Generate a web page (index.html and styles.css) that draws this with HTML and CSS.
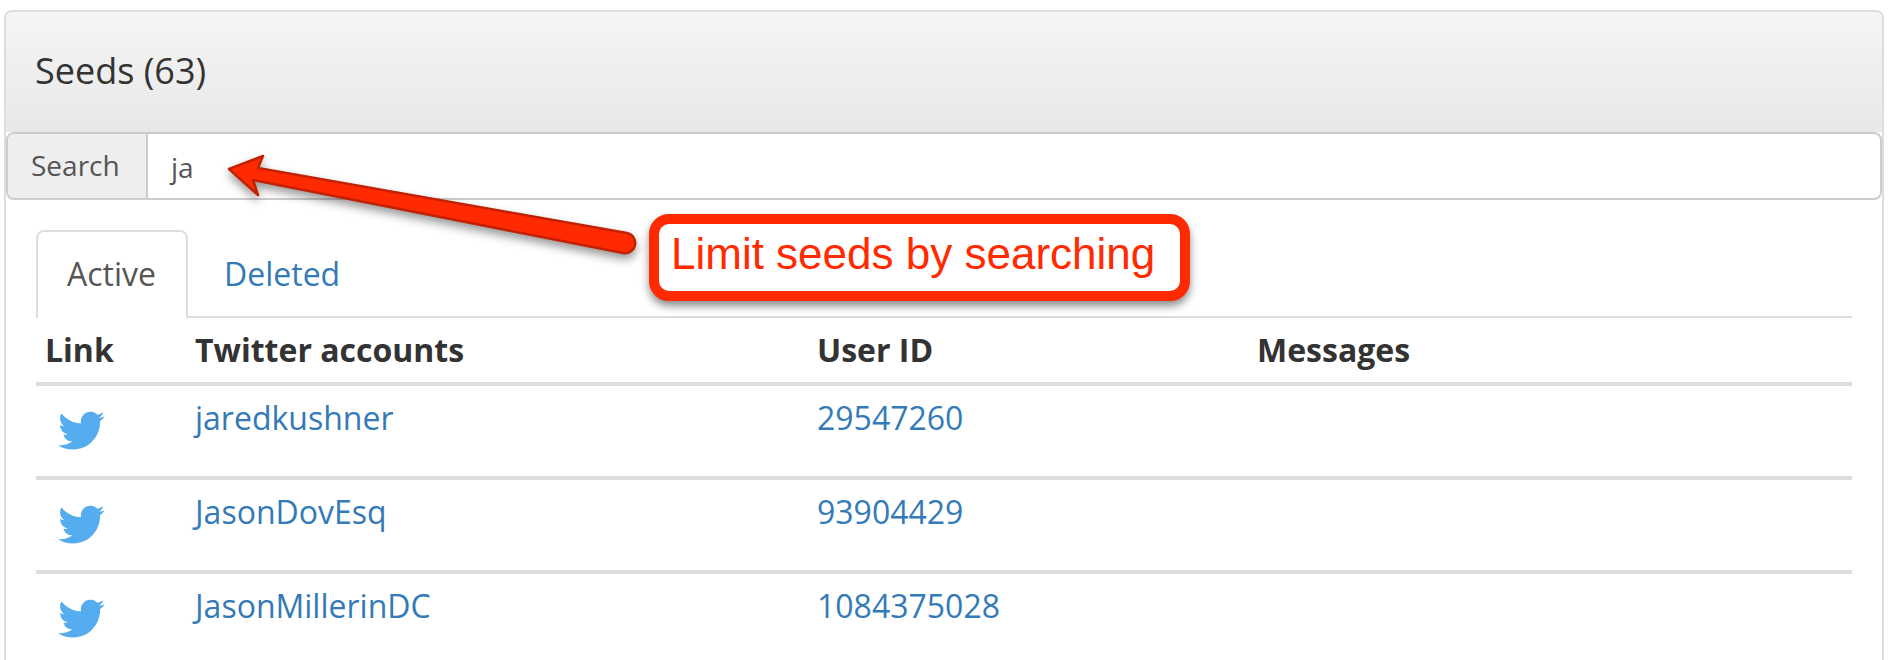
FILE: index.html
```html
<!DOCTYPE html>
<html lang="en">
<head>
<meta charset="utf-8">
<title>Seeds</title>
<link rel="stylesheet" href="styles.css">
</head>
<body>
<svg class="sprite" width="0" height="0"><symbol id="bird" viewBox="0 1.4 24 20.6"><path d="M23.953 4.57a10 10 0 01-2.825.775 4.958 4.958 0 002.163-2.723c-.951.555-2.005.959-3.127 1.184a4.92 4.92 0 00-8.384 4.482C7.69 8.095 4.067 6.13 1.64 3.162a4.822 4.822 0 00-.666 2.475c0 1.71.87 3.213 2.188 4.096a4.904 4.904 0 01-2.228-.616v.06a4.923 4.923 0 003.946 4.827 4.996 4.996 0 01-2.212.085 4.936 4.936 0 004.604 3.417 9.867 9.867 0 01-6.102 2.105c-.39 0-.779-.023-1.17-.067a13.995 13.995 0 007.557 2.209c9.053 0 13.998-7.496 13.998-13.985 0-.21 0-.42-.015-.63A9.935 9.935 0 0024 4.59z"/></symbol></svg>
<section class="panel">
  <header class="panel-heading"><h1 class="panel-title">Seeds (63)</h1></header>
  <div class="input-group">
    <span class="addon">Search</span>
    <span class="input">ja</span>
  </div>
  <div class="panel-body">
    <ul class="tabs">
      <li class="tab tab-active">Active</li>
      <li class="tab"><a href="#">Deleted</a></li>
    </ul>
    <table class="seeds">
      <thead>
        <tr><th class="col-link">Link</th><th class="col-name">Twitter accounts</th><th class="col-id">User ID</th><th>Messages</th></tr>
      </thead>
      <tbody>
        <tr><td><svg class="bird"><use href="#bird"/></svg></td><td><a href="#">jaredkushner</a></td><td><a href="#">29547260</a></td><td></td></tr>
        <tr><td><svg class="bird"><use href="#bird"/></svg></td><td><a href="#">JasonDovEsq</a></td><td><a href="#">93904429</a></td><td></td></tr>
        <tr><td><svg class="bird"><use href="#bird"/></svg></td><td><a href="#">JasonMillerinDC</a></td><td><a href="#">1084375028</a></td><td></td></tr>
      </tbody>
    </table>
  </div>
</section>
<svg class="arrow" viewBox="0 0 1902 660" width="1902" height="660">
  <path d="M229 169 L263 156 L258 168 L627 233 A10 10 0 0 1 623 253 L253 180 L258 195 Z"/>
</svg>
<div class="callout">Limit seeds by searching</div>
</body>
</html>
```
FILE: styles.css
```css
html, body { margin: 0; height: 660px; overflow: hidden; background: #fff; }
body {
  font-family: "Open Sans", "Noto Sans", sans-serif;
  font-size: 32px;
  line-height: 42px;
  color: #333;
  padding: 10px 18px 0 4px;
  box-sizing: border-box;
  position: relative;
}
a { color: #337ab7; text-decoration: none; }
.sprite { position: absolute; }

.panel {
  border: 2px solid #ddd;
  border-bottom: 0;
  border-radius: 8px 8px 0 0;
  height: 650px;
  overflow: hidden;
  box-sizing: border-box;
}
.panel-heading {
  height: 120px;
  box-sizing: border-box;
  padding: 37px 25px 0 29px;
  background: linear-gradient(#f5f5f5, #e8e8e8);
  border-radius: 6px 6px 0 0;
}
.panel-title { margin: 0; font-size: 36px; font-weight: 400; line-height: 44px; color: #333; }

.input-group {
  display: flex;
  height: 68px;
  box-sizing: border-box;
  border: 2px solid #ccc;
  border-radius: 8px;
  background: #fff;
  font-size: 28px;
}
.addon {
  width: 140px;
  flex: none;
  box-sizing: border-box;
  background: #eee;
  color: #555;
  border-right: 2px solid #ccc;
  border-radius: 6px 0 0 6px;
  padding: 10px 0 0 23px;
}
.input { padding: 12px 0 0 23px; color: #555; }

.panel-body { padding: 30px 30px 0 30px; }
.tabs {
  display: flex;
  list-style: none;
  margin: 0;
  padding: 0;
  height: 88px;
  box-sizing: border-box;
  border-bottom: 2px solid #ddd;
}
.tab { padding: 23px 31px 0 36px; height: 88px; box-sizing: border-box; }
.tab-active {
  width: 152px;
  padding: 21px 0 0 29px;
  color: #555;
  background: #fff;
  border: 2px solid #ddd;
  border-bottom: 0;
  border-radius: 8px 8px 0 0;
}
.seeds { width: 100%; border-collapse: collapse; table-layout: fixed; }
.seeds th {
  text-align: left;
  font-weight: 700;
  padding: 11px 10px 11px;
  height: 65px;
  box-sizing: border-box;
  border-bottom: 4px solid #ddd;
}
.seeds th:first-child { padding-left: 9px; }
.seeds td {
  vertical-align: top;
  padding: 11px 10px 0;
  height: 94px;
  box-sizing: border-box;
  border-bottom: 4px solid #ddd;
}
.col-link { width: 149px; }
.col-name { width: 622px; }
.col-id { width: 440px; }
.bird { display: block; width: 47px; height: 40px; margin: 13px 0 0 12px; fill: #55acee; }

.arrow {
  position: absolute;
  left: 0;
  top: 0;
  filter: drop-shadow(0 5px 5px rgba(0,0,0,.4));
}
.arrow path { fill: #ff2a00; stroke: #c32100; stroke-width: 2.5; stroke-linejoin: round; }
.callout {
  position: absolute;
  left: 649px;
  top: 214px;
  width: 541px;
  height: 87px;
  box-sizing: border-box;
  border: 10px solid #ff2a00;
  border-radius: 20px;
  background: #fff;
  box-shadow: 0 5px 8px rgba(0,0,0,.45);
  color: #ff2a00;
  font-family: "Liberation Sans", Arial, sans-serif;
  font-size: 44px;
  line-height: 59px;
  padding-left: 12px;
  white-space: nowrap;
}
```
